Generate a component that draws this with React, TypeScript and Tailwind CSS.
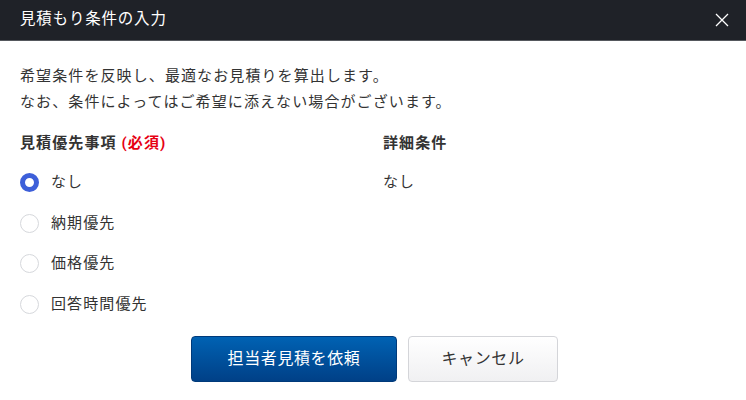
import React, { useState } from 'react';

const options = ['なし', '納期優先', '価格優先', '回答時間優先'];

export default function App() {
    const [selected, setSelected] = useState(0);

    return (
        <div className="w-[746px] h-[400px] bg-white text-[#333] font-['Roboto','Noto_Sans_CJK_JP',sans-serif]">
            {/* Header */}
            <div className="h-[41px] bg-[#1f2228] border-b border-[#55585d] flex items-center justify-between pl-[20px] pr-[17px]">
                <h1 className="text-[15.5px] tracking-[0.8px] text-white leading-none">見積もり条件の入力</h1>
                <button className="text-white">
                    <svg width="14" height="14" viewBox="0 0 14 14" fill="none" stroke="currentColor" strokeWidth="1.3">
                        <path d="M1 1L13 13M13 1L1 13" />
                    </svg>
                </button>
            </div>

            {/* Body */}
            <div className="px-[20px] pt-[23px] text-[15px] tracking-[1.1px]">
                <p className="leading-[25.5px]">
                    希望条件を反映し、最適なお見積りを算出します。
                    <br />
                    なお、条件によってはご希望に添えない場合がございます。
                </p>

                <div className="flex mt-[18px]">
                    <div className="w-[363px]">
                        <h2 className="font-bold leading-[20px]">
                            見積優先事項 <span className="text-[#e60012]">(必須)</span>
                        </h2>
                        <div className="mt-[9px] flex flex-col">
                            {options.map((label, i) => (
                                <label
                                    key={label}
                                    className="flex items-center gap-[12px] h-[40.7px] cursor-pointer"
                                    onClick={() => setSelected(i)}
                                >
                                    {selected === i ? (
                                        <span className="w-[19px] h-[19px] rounded-full border-[5px] border-[#3d5fd9] bg-white" />
                                    ) : (
                                        <span className="w-[19px] h-[19px] rounded-full border border-[#d6d8dc] bg-white" />
                                    )}
                                    <span>{label}</span>
                                </label>
                            ))}
                        </div>
                    </div>
                    <div>
                        <h2 className="font-bold leading-[20px]">詳細条件</h2>
                        <div className="mt-[9px] h-[40.7px] flex items-center">なし</div>
                    </div>
                </div>

                {/* Buttons */}
                <div className="flex justify-center gap-[11px] mt-[11px] pl-[3px] tracking-[0.6px]">
                    <button className="w-[206px] h-[46px] rounded-[4px] bg-gradient-to-b from-[#0062b3] to-[#004087] border border-[#003a7a] text-white text-[16px]">
                        担当者見積を依頼
                    </button>
                    <button className="w-[150px] h-[46px] rounded-[4px] bg-gradient-to-b from-white to-[#f0f0f2] border border-[#d4d5d9] text-[#333] text-[16px]">
                        キャンセル
                    </button>
                </div>
            </div>
        </div>
    );
}
